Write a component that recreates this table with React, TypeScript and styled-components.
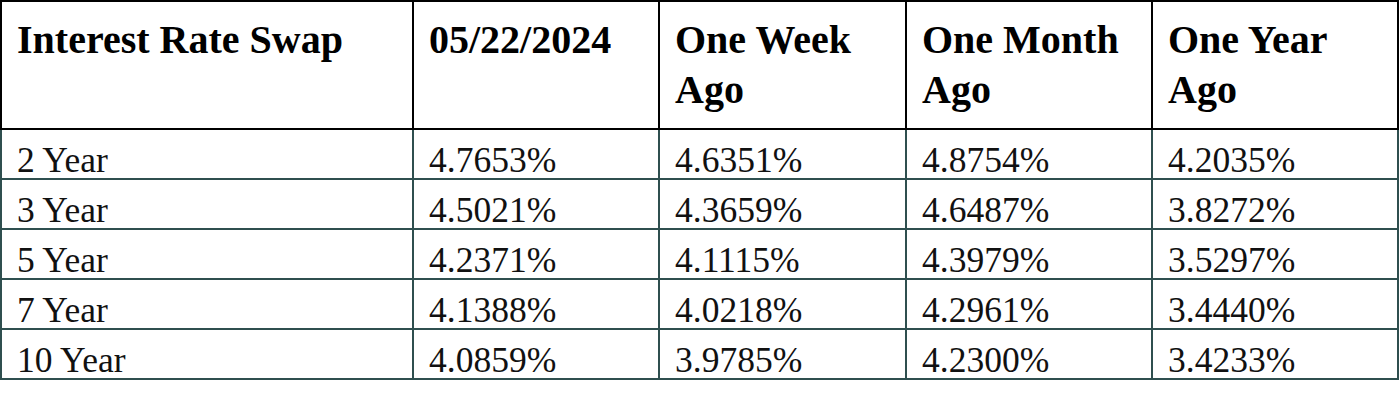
import styled, { createGlobalStyle } from "styled-components";

const rates = [
  { term: "2 Year", values: ["4.7653%", "4.6351%", "4.8754%", "4.2035%"] },
  { term: "3 Year", values: ["4.5021%", "4.3659%", "4.6487%", "3.8272%"] },
  { term: "5 Year", values: ["4.2371%", "4.1115%", "4.3979%", "3.5297%"] },
  { term: "7 Year", values: ["4.1388%", "4.0218%", "4.2961%", "3.4440%"] },
  { term: "10 Year", values: ["4.0859%", "3.9785%", "4.2300%", "3.4233%"] },
];

const headings = ["Interest Rate Swap", "05/22/2024", "One Week Ago", "One Month Ago", "One Year Ago"];
const colWidths = [412, 246, 247, 246, 246];

const GlobalStyle = createGlobalStyle`
  html, body {
    margin: 0;
    padding: 0;
    background: #fff;
  }
  body {
    font-family: "Liberation Serif", "Times New Roman", serif;
    color: #000;
  }
`;

const Table = styled.table`
  border-collapse: collapse;
  table-layout: fixed;
  width: 1397px;
  font-family: "Liberation Serif", "Times New Roman", serif;
`;

const HeadCell = styled.th`
  border: 2px solid #000;
  padding: 13px 15px 13px;
  font-size: 40px;
  line-height: 50px;
  font-weight: bold;
  text-align: left;
  vertical-align: top;
  color: #000;
`;

const Cell = styled.td`
  border: 2px solid #2f4f4f;
  padding: 12px 15px 0;
  font-size: 35.5px;
  line-height: 36px;
  text-align: left;
  vertical-align: top;
  color: #111;
  white-space: nowrap;
`;

export default function App() {
  return (
    <>
      <GlobalStyle />
      <Table>
        <colgroup>
          {colWidths.map((w, i) => (
            <col key={i} style={{ width: w }} />
          ))}
        </colgroup>
        <thead>
          <tr>
            {headings.map((h) => (
              <HeadCell key={h}>{h}</HeadCell>
            ))}
          </tr>
        </thead>
        <tbody>
          {rates.map((row) => (
            <tr key={row.term}>
              <Cell>{row.term}</Cell>
              {row.values.map((v, i) => (
                <Cell key={i}>{v}</Cell>
              ))}
            </tr>
          ))}
        </tbody>
      </Table>
    </>
  );
}
